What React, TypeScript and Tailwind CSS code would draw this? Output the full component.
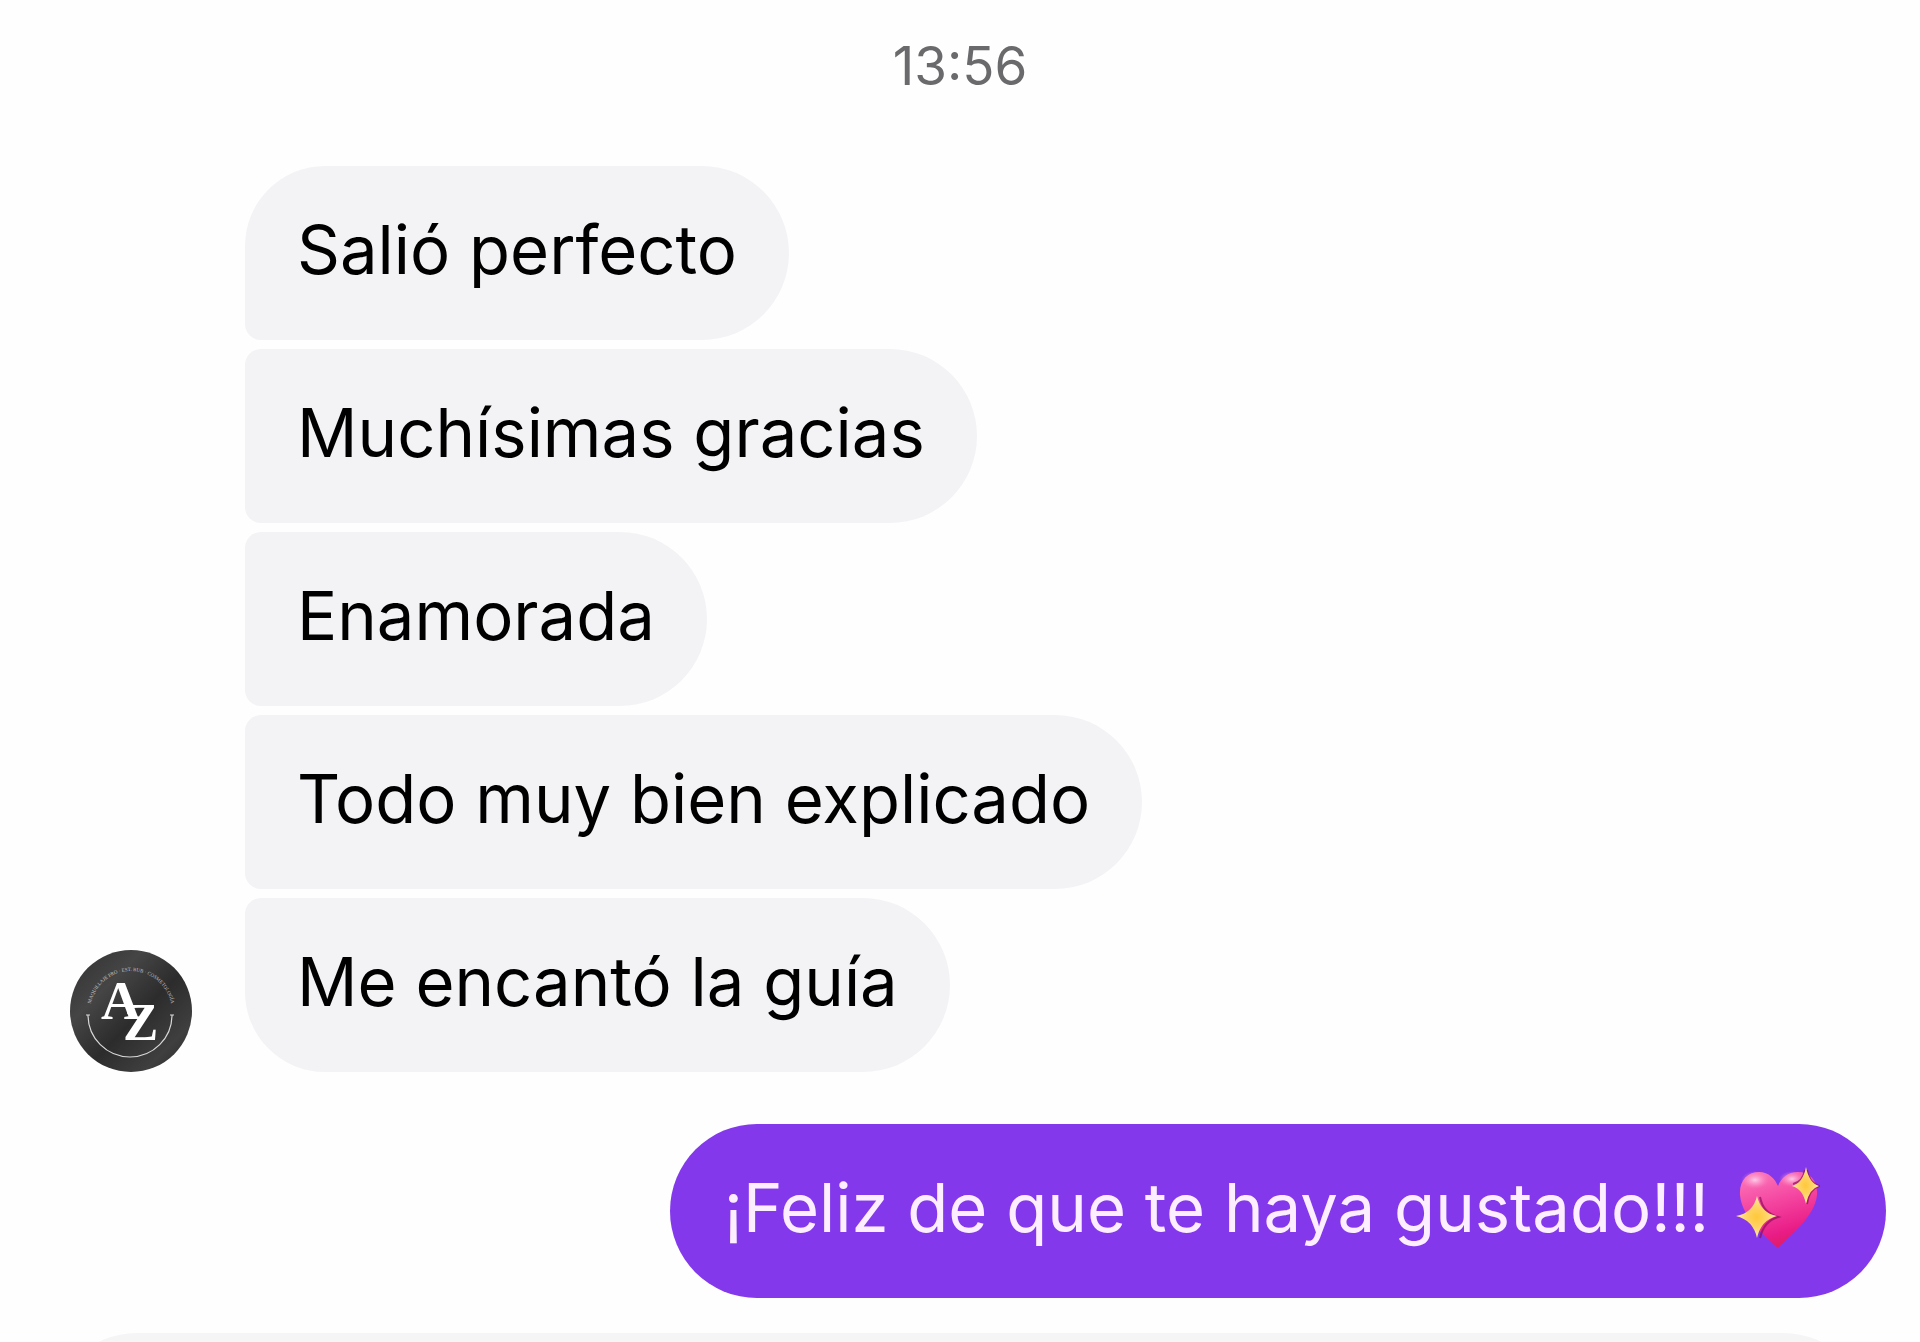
import type { ReactNode } from 'react';

const received = [
  { id: 1, text: 'Salió perfecto' },
  { id: 2, text: 'Muchísimas gracias' },
  { id: 3, text: 'Enamorada' },
  { id: 4, text: 'Todo muy bien explicado' },
  { id: 5, text: 'Me encantó la guía' },
];

export default function App() {
  return (
    <main className="flex h-screen flex-col overflow-hidden bg-[#fefefe] font-['Inter','Liberation_Sans',sans-serif]">
      <time className="shrink-0 pt-9 text-center text-[53px] leading-[60px] text-[#6a6a6c]">13:56</time>

      <section className="mt-[70px] flex shrink-0 items-end gap-[53px] pl-[70px]">
        <Avatar />
        <ul className="flex flex-col items-start gap-[9px]">
          {received.map((message, index) => (
            <ReceivedBubble
              key={message.id}
              isFirst={index === 0}
              isLast={index === received.length - 1}
            >
              {message.text}
            </ReceivedBubble>
          ))}
        </ul>
      </section>

      <section className="mt-[52px] flex shrink-0 justify-end pr-[34px]">
        <p className="flex h-[174px] items-center gap-[27px] rounded-full bg-[#8338ec] pr-[66px] pb-1.5 pl-[54px] text-[67px] text-[#fdeeff]">
          ¡Feliz de que te haya gustado!!!
          <SparklingHeart />
        </p>
      </section>

      {/* Composer, cut off by the bottom of the window */}
      <div className="mx-[50px] mt-[35px] h-[174px] shrink-0 rounded-full bg-[#f5f5f6]" />
    </main>
  );
}

function ReceivedBubble({
  isFirst,
  isLast,
  children,
}: {
  isFirst: boolean;
  isLast: boolean;
  children: ReactNode;
}) {
  return (
    <li
      className={`flex h-[174px] items-center rounded-r-[87px] bg-[#f3f3f6] px-[52px] pb-1.5 text-[67px] text-black ${
        isFirst ? 'rounded-tl-[80px]' : 'rounded-tl-[16px]'
      } ${isLast ? 'rounded-bl-[80px]' : 'rounded-bl-[16px]'}`}
    >
      {children}
    </li>
  );
}

function Avatar() {
  return (
    <svg viewBox="0 0 122 122" className="size-[122px] shrink-0" role="img" aria-label="AZ">
      <defs>
        <linearGradient id="avatar-bg" x1="0" y1="0" x2="1" y2="1">
          <stop offset="0" stopColor="#303030" />
          <stop offset="0.3" stopColor="#454545" />
          <stop offset="0.55" stopColor="#2c2c2c" />
          <stop offset="0.8" stopColor="#3f3f3f" />
          <stop offset="1" stopColor="#262626" />
        </linearGradient>
        <path id="avatar-arc" d="M20 62A41 41 0 0 1 102 62" />
      </defs>
      <circle cx="61" cy="61" r="61" fill="url(#avatar-bg)" />
      <path d="M18 65A42 42 0 0 0 102 65" fill="none" stroke="#d8d8d8" strokeWidth="1.2" />
      <path d="M16 65h4M100 65h4" stroke="#d8d8d8" strokeWidth="1" />
      <text fill="#c4c4c4" fontSize="5" fontFamily="Liberation Serif, serif">
        <textPath href="#avatar-arc" startOffset="50%" textAnchor="middle">
          MAQUILLAJE PRO · EST. RUB · COSMETOLOGÍA
        </textPath>
      </text>
      <g fill="#fff" fontFamily="Liberation Serif, serif" fontWeight="700">
        <text x="31" y="69" fontSize="55">A</text>
        <text x="53" y="90" fontSize="53">Z</text>
      </g>
    </svg>
  );
}

function SparklingHeart() {
  return (
    <svg viewBox="0 0 84 84" className="size-[84px] shrink-0" role="img" aria-label="💖">
      <defs>
        <linearGradient id="heart-fill" x1="0.3" y1="0" x2="0.6" y2="1">
          <stop offset="0" stopColor="#fb74b8" />
          <stop offset="0.4" stopColor="#f445a0" />
          <stop offset="0.8" stopColor="#e91c86" />
          <stop offset="1" stopColor="#dc1c60" />
        </linearGradient>
        <radialGradient id="heart-shine">
          <stop offset="0" stopColor="#ffd9ef" stopOpacity="0.9" />
          <stop offset="1" stopColor="#ff8ac6" stopOpacity="0" />
        </radialGradient>
        <radialGradient id="sparkle-fill">
          <stop offset="0" stopColor="#ffc83a" />
          <stop offset="0.5" stopColor="#ffd467" />
          <stop offset="1" stopColor="#ffe9a8" />
        </radialGradient>
      </defs>
      <path
        d="M42 82C36 76 6 54 4 29C3 14 12 6 23 6C33 6 39 13 42 20C45 12 52 6 62 6C74 6 82 15 81 29C79 52 49 74 42 82Z"
        fill="url(#heart-fill)"
      />
      <ellipse cx="19" cy="14" rx="14" ry="9" fill="url(#heart-shine)" />
      <ellipse cx="56" cy="13" rx="13" ry="8" fill="url(#heart-shine)" />
      <g fill="none" stroke="#8f0d58" strokeOpacity="0.7" strokeWidth="2">
        <path d="M24 31Q27 47 42 51Q28 55 24 72" />
        <path d="M71 4Q73 17 83 20Q73 23 71 38" />
        <path d="M69 4Q67 16 57 18" />
      </g>
      <path d="M21 30Q25 47 41 50Q25 54 21 72Q17 54 0 50Q17 47 21 30Z" fill="url(#sparkle-fill)" />
      <path d="M70 1Q73 17 83 20Q73 23 70 38Q67 23 56 20Q67 17 70 1Z" fill="url(#sparkle-fill)" />
    </svg>
  );
}
